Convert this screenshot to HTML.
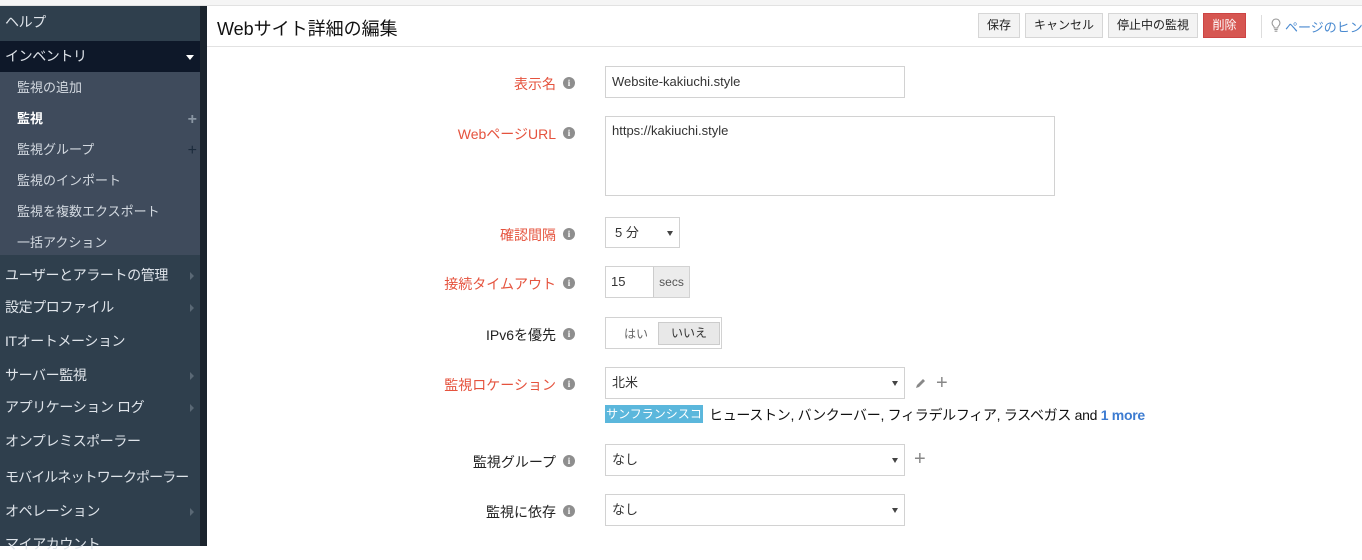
<!DOCTYPE html>
<html><head><meta charset="utf-8"><style>
*{margin:0;padding:0;box-sizing:border-box}
body{width:1362px;height:546px;overflow:hidden;background:#fff;font-family:"Liberation Sans","Noto Sans CJK JP",sans-serif;position:relative;font-size:13px}
.a{position:absolute}
#top{left:0;top:0;width:1362px;height:6px;background:#f5f5f5;border-bottom:1px solid #e2e2e2}
#sb{left:0;top:6px;width:200px;height:540px;background:#2f3f4d}
#sbar{left:200px;top:6px;width:7px;height:540px;background:#1b242d}
.si{position:absolute;left:0;width:200px;color:#dfe4ea;font-size:14px;padding-left:5px;line-height:32px;letter-spacing:-0.4px;white-space:nowrap}
.sub{position:absolute;left:0;width:200px;color:#d3d9e0;font-size:13px;padding-left:17px;line-height:31px}
.arr{position:absolute;right:6px;top:13px;width:0;height:0;border-left:4px solid #5a6875;border-top:4px solid transparent;border-bottom:4px solid transparent}
.pl{position:absolute;right:3px;top:1px;color:#8a96a3;font-size:16px}
#hdr{left:207px;top:6px;width:1155px;height:41px;border-bottom:1px solid #e2e2e2;background:#fff}
.btn{position:absolute;top:13px;height:25px;background:#f3f3f3;border:1px solid #d6d6d6;font-size:12px;line-height:23px;text-align:center;color:#222}
.lbl{position:absolute;right:806px;font-size:14px;color:#e5533e;white-space:nowrap}
.lbl.k{color:#222}
.i{position:absolute;left:563px;width:12px;height:12px;border-radius:50%;background:#8e8e8e;color:#fff;font-size:9px;font-weight:bold;text-align:center;line-height:12px;font-family:"Liberation Serif",serif}
.inp{position:absolute;border:1px solid #d2d2d2;background:#fff;font-size:13px;color:#333;padding-left:6px}
.sel::after{content:"";position:absolute;right:6px;top:50%;margin-top:-2px;border-top:5px solid #444;border-left:3px solid transparent;border-right:3px solid transparent}
</style></head><body>
<div class="a" id="top"></div>
<div class="a" id="sb">
 <div class="si" style="top:0">ヘルプ</div>
 <div class="si" style="top:35px;background:#0e1829;height:31px;line-height:31px">インベントリ<span style="position:absolute;right:6px;top:14px;border-top:5px solid #fff;border-left:4px solid transparent;border-right:4px solid transparent"></span></div>
 <div style="position:absolute;top:66px;left:0;width:200px;height:183px;background:#3f4b5c">
  <div class="sub" style="top:0">監視の追加</div>
  <div class="sub" style="top:31px;color:#fff;font-weight:bold">監視<span class="pl">+</span></div>
  <div class="sub" style="top:62px">監視グループ<span class="pl" style="color:#1b2a3b">+</span></div>
  <div class="sub" style="top:93px">監視のインポート</div>
  <div class="sub" style="top:124px">監視を複数エクスポート</div>
  <div class="sub" style="top:155px">一括アクション</div>
 </div>
 <div class="si" style="top:253px">ユーザーとアラートの管理<span class="arr"></span></div>
 <div class="si" style="top:285px">設定プロファイル<span class="arr"></span></div>
 <div class="si" style="top:319px">ITオートメーション</div>
 <div class="si" style="top:353px">サーバー監視<span class="arr"></span></div>
 <div class="si" style="top:385px">アプリケーション ログ<span class="arr"></span></div>
 <div class="si" style="top:419px">オンプレミスポーラー</div>
 <div class="si" style="top:455px;letter-spacing:-0.9px">モバイルネットワークポーラー</div>
 <div class="si" style="top:489px">オペレーション<span class="arr"></span></div>
 <div class="si" style="top:522px">マイアカウント</div>
</div>
<div class="a" id="sbar"></div>
<div class="a" id="hdr">
 <div style="position:absolute;left:10px;top:9px;font-size:18px;color:#111">Webサイト詳細の編集</div>
</div>
<div class="btn" style="left:978px;width:42px">保存</div>
<div class="btn" style="left:1025px;width:78px">キャンセル</div>
<div class="btn" style="left:1108px;width:90px">停止中の監視</div>
<div class="btn" style="left:1203px;width:43px;background:#d65651;border-color:#c44;color:#fff">削除</div>
<div class="a" style="left:1261px;top:15px;width:1px;height:23px;background:#ddd"></div>
<svg class="a" style="left:1271px;top:18px" width="10" height="15" viewBox="0 0 10 15"><path d="M5 1a4 4 0 0 0-2.5 7c.6.6.8 1.2.8 2h3.4c0-.8.2-1.4.8-2A4 4 0 0 0 5 1z M3.3 11.5h3.4 M3.6 13.2h2.8" fill="none" stroke="#999" stroke-width="1.1"/></svg>
<div class="a" style="left:1285px;top:17px;font-size:13px;color:#4a8ad0;white-space:nowrap">ページのヒン</div>

<div class="lbl" style="top:74px">表示名</div><div class="i" style="top:77px">i</div>
<div class="inp" style="left:605px;top:66px;width:300px;height:32px;line-height:30px">Website-kakiuchi.style</div>

<div class="lbl" style="top:124px">WebページURL</div><div class="i" style="top:127px">i</div>
<div class="inp" style="left:605px;top:116px;width:450px;height:80px;padding-top:6px">https://kakiuchi.style</div>

<div class="lbl" style="top:225px">確認間隔</div><div class="i" style="top:228px">i</div>
<div class="inp sel" style="left:605px;top:217px;width:75px;height:31px;line-height:29px;padding-left:9px">5 分</div>

<div class="lbl" style="top:274px">接続タイムアウト</div><div class="i" style="top:277px">i</div>
<div class="inp" style="left:605px;top:266px;width:85px;height:32px;line-height:30px;padding-left:5px">15<span style="position:absolute;left:47px;top:0;width:36px;height:30px;background:#ececec;border-left:1px solid #ccc;font-size:12px;text-align:center;color:#555">secs</span></div>

<div class="lbl k" style="top:325px">IPv6を優先</div><div class="i" style="top:328px">i</div>
<div class="inp" style="left:605px;top:317px;width:117px;height:32px;padding:0">
 <span style="position:absolute;left:18px;top:7px;font-size:12px;color:#666">はい</span>
 <span style="position:absolute;left:52px;top:4px;width:62px;height:23px;background:#e8e8e8;border:1px solid #ccc;font-size:12px;text-align:center;line-height:21px;color:#333">いいえ</span>
</div>

<div class="lbl" style="top:375px">監視ロケーション</div><div class="i" style="top:378px">i</div>
<div class="inp sel" style="left:605px;top:367px;width:300px;height:32px;line-height:30px">北米</div>
<svg class="a" style="left:914px;top:376px" width="14" height="14" viewBox="0 0 14 14"><path d="M2 12l1-3 6-6 2 2-6 6z" fill="#888"/></svg>
<div class="a" style="left:936px;top:372px;color:#888;font-size:20px">+</div>
<div class="a" style="left:605px;top:405px;width:98px;height:18px;background:#5bb7dc;color:#fff;font-size:12px;line-height:18px;text-align:center">サンフランシスコ</div>
<div class="a" style="left:709px;top:405px;font-size:14px;color:#111;white-space:nowrap;letter-spacing:-0.3px">ヒューストン, バンクーバー, フィラデルフィア, ラスベガス and <span style="color:#3d7cd1;font-weight:bold">1 more</span></div>

<div class="lbl k" style="top:452px">監視グループ</div><div class="i" style="top:455px">i</div>
<div class="inp sel" style="left:605px;top:444px;width:300px;height:32px;line-height:30px">なし</div>
<div class="a" style="left:914px;top:448px;color:#888;font-size:20px">+</div>

<div class="lbl k" style="top:502px">監視に依存</div><div class="i" style="top:505px">i</div>
<div class="inp sel" style="left:605px;top:494px;width:300px;height:32px;line-height:30px">なし</div>
</body></html>
